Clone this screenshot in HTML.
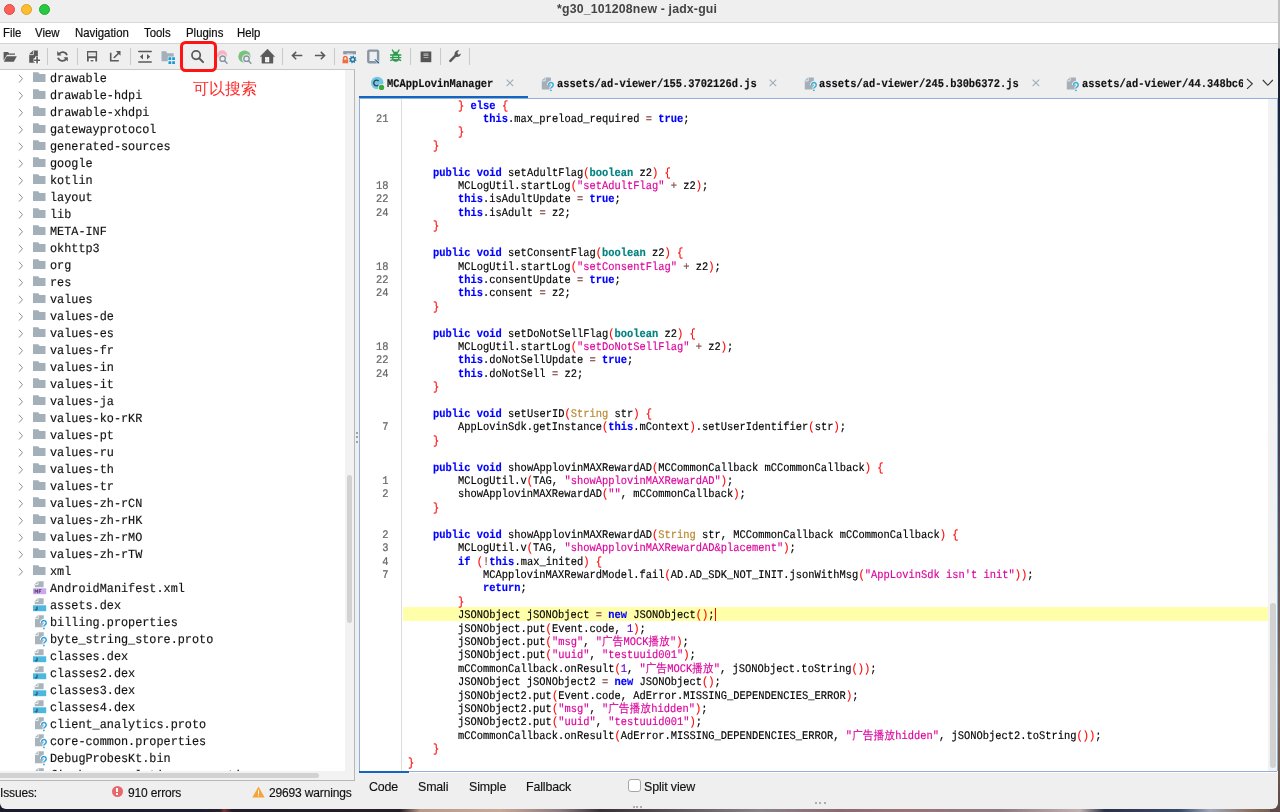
<!DOCTYPE html>
<html><head><meta charset="utf-8">
<style>
*{box-sizing:border-box}
html,body{margin:0;padding:0}
body{width:1280px;height:812px;overflow:hidden;position:relative;background:#1e1c26;font-family:"Liberation Sans",sans-serif}
#desk{position:absolute;left:0;top:800px;width:1280px;height:12px;background:linear-gradient(90deg,#1b1b2c 0px,#1d1d30 200px,#2a1f2a 220px,#7a3038 224px,#201c28 232px,#261e26 400px,#b89888 420px,#c8a898 500px,#8a7a80 560px,#3a3038 600px,#4a4048 640px,#6a6068 700px,#8a8088 760px,#8a6a72 840px,#9a7078 900px,#8a7a80 1000px,#c0b0b0 1080px,#2a3048 1105px,#3a4a68 1180px,#a0a8b8 1210px,#8a7060 1250px,#6a5a50 1280px)}
#deskr{position:absolute;left:1270px;top:0;width:10px;height:812px;background:linear-gradient(180deg,#c0c0c0 0px,#c0c0c0 48px,#151a28 49px,#2a3048 200px,#3a3a50 400px,#6a5a58 600px,#8a6a58 700px,#5a4a48 812px)}
.win{position:absolute;left:0;top:0;width:1278px;height:809px;background:#efefef;border-radius:0 0 6px 6px;overflow:hidden}
.abs{position:absolute}
#title{position:absolute;left:0;top:0;width:1278px;height:23px;background:#efefef;border-bottom:1px solid #d9d9d9}
.tl{position:absolute;top:4px;width:11px;height:11px;border-radius:50%}
#ttext{position:absolute;left:556.5px;top:2.3px;font-size:12.3px;font-weight:bold;color:#444;letter-spacing:0.17px;white-space:nowrap}
#menu{position:absolute;left:0;top:23px;width:1278px;height:21px;background:#fff;border-bottom:1px solid #d3d3d3}
.mi{position:absolute;top:3.5px;transform:scaleY(1.08);transform-origin:0 11px;font-size:11.4px;color:#111;white-space:nowrap;-webkit-text-stroke:0.2px #111}
#tree{position:absolute;left:0;top:69px;width:355px;height:712px;border-top:1px solid #c8c8c8;border-right:1px solid #b8b8b8;border-bottom:1px solid #b8b8b8;background:#f2f2f2}
#treewhite{position:absolute;left:0;top:70px;width:345px;height:701px;background:#fff;overflow:hidden}
.tt{position:absolute;text-rendering:geometricPrecision;transform:scaleY(1.06);transform-origin:0 12.5px;-webkit-text-stroke:0.15px currentColor;left:50.3px;height:17px;line-height:17px;font-family:"Liberation Mono",monospace;font-size:11.83px;color:#111;white-space:nowrap}
#annot{position:absolute;left:193px;top:79px;font-size:16px;color:#ff2a2a;letter-spacing:0px;white-space:nowrap}
#code{position:absolute;left:359px;top:98px;width:918px;height:675px;background:#fff;border-left:1px solid #8fb2d8;border-top:1px solid #8fb2d8;overflow:hidden}
.cl{position:absolute;text-rendering:geometricPrecision;transform:scaleY(1.12);transform-origin:0 9.5px;-webkit-text-stroke:0.15px currentColor;left:407.9px;height:13.41px;line-height:13.41px;font-family:"Liberation Mono",monospace;font-size:10.42px;letter-spacing:0.01px;color:#000;white-space:pre}
.ln{position:absolute;text-rendering:geometricPrecision;transform:scaleY(1.12);transform-origin:0 9.5px;-webkit-text-stroke:0.2px currentColor;left:359.5px;width:28.5px;text-align:right;height:13.41px;line-height:13.41px;font-family:"Liberation Mono",monospace;font-size:10.42px;color:#666;white-space:pre}
i{font-style:normal}
.cl,.ln,.tt,.tab,.mi,.bt,.st,#ttext,#annot{will-change:transform}
.cj{letter-spacing:0.35px}
i.kw{color:#0000ff;font-weight:bold}
i.ty{color:#008080;font-weight:bold}
i.fn{color:#b8862b}
i.str{color:#dc009c}
i.sep{color:#ff0000}
i.op{color:#804040}
i.num{color:#6400c8}
.tab{position:absolute;top:72px;text-rendering:geometricPrecision;transform:scaleY(1.12);transform-origin:0 17px;height:26px;line-height:26px;font-family:"Liberation Mono",monospace;font-size:10.42px;font-weight:bold;color:#111;white-space:nowrap;-webkit-text-stroke:0.15px #111}
.tx{position:absolute;top:76px;font-size:13px;color:#a8a8a8;font-family:"Liberation Sans",sans-serif}
.bt{position:absolute;top:779.9px;font-size:12.4px;letter-spacing:-0.12px;color:#111;white-space:nowrap;-webkit-text-stroke:0.15px #111}
.st{position:absolute;top:786.2px;font-size:12px;letter-spacing:-0.15px;color:#111;white-space:nowrap;-webkit-text-stroke:0.15px #111}
</style></head><body>
<div id="desk"></div>
<div id="deskr"></div>
<div class="win">
 <div id="title">
  <div class="tl" style="left:3.6px;background:#fe5f57;border:0.6px solid #e2463f"></div>
  <div class="tl" style="left:21.3px;background:#febc2e;border:0.6px solid #e0a028"></div>
  <div class="tl" style="left:39.1px;background:#28c840;border:0.6px solid #1aab29"></div>
  <div id="ttext">*g30_101208new - jadx-gui</div>
 </div>
 <div id="menu"><span class="mi" style="left:3.3px">File</span><span class="mi" style="left:34.9px">View</span><span class="mi" style="left:74.9px">Navigation</span><span class="mi" style="left:143.6px">Tools</span><span class="mi" style="left:185.70000000000002px">Plugins</span><span class="mi" style="left:237.3px">Help</span></div>
 <svg style="position:absolute;left:2px;top:50px" width="16" height="12" viewBox="0 0 16 12" ><path d="M1.6 1.9H6L7.2 3.6H13V4.8H5L1.6 10.5Z" fill="#5a5a5a"/><path d="M4.7 6.2H14.8L11.8 11.7H1.8Z" fill="#5a5a5a"/></svg>
<svg style="position:absolute;left:27.5px;top:49.5px" width="14" height="15" viewBox="0 0 14 15" ><path d="M1.2 4.3L5 0.4H9.9V12.8H1.2Z" fill="#5a5a5a"/><path d="M1.2 4.6H5.4V0.4" stroke="#e6e6e6" stroke-width="0.9" fill="none"/><path d="M9.1 6.4V13.9M5.6 10.3H12.6" stroke="#fff" stroke-width="4"/><path d="M9.1 6.9V13.4M6.1 10.3H12.1" stroke="#5a5a5a" stroke-width="1.6"/></svg>
<div style="position:absolute;left:47.0px;top:47.5px;width:1px;height:17.3px;background:#c9c9c9"></div>
<div style="position:absolute;left:77.0px;top:47.5px;width:1px;height:17.3px;background:#c9c9c9"></div>
<div style="position:absolute;left:129.5px;top:47.5px;width:1px;height:17.3px;background:#c9c9c9"></div>
<div style="position:absolute;left:281.7px;top:47.5px;width:1px;height:17.3px;background:#c9c9c9"></div>
<div style="position:absolute;left:334.1px;top:47.5px;width:1px;height:17.3px;background:#c9c9c9"></div>
<div style="position:absolute;left:410.1px;top:47.5px;width:1px;height:17.3px;background:#c9c9c9"></div>
<div style="position:absolute;left:439.8px;top:47.5px;width:1px;height:17.3px;background:#c9c9c9"></div>
<div style="position:absolute;left:469.0px;top:47.5px;width:1px;height:17.3px;background:#c9c9c9"></div>
<svg style="position:absolute;left:56px;top:50px" width="13" height="13" viewBox="0 0 13 13" ><path d="M2.8 4.2A4.6 4.6 0 0 1 11 5.2" stroke="#5a5a5a" stroke-width="1.8" fill="none"/><path d="M1.2 1V5.5H5.5Z" fill="#5a5a5a"/><path d="M10.2 8.8A4.6 4.6 0 0 1 2 7.8" stroke="#5a5a5a" stroke-width="1.8" fill="none"/><path d="M11.8 11.5V7.2H7.5Z" fill="#5a5a5a"/></svg>
<svg style="position:absolute;left:86px;top:50px" width="12" height="12" viewBox="0 0 12 12" ><path d="M2.8 8.3H9.3V11.6H2.8Z" fill="#fff"/><path fill-rule="evenodd" d="M1 1H11.1V11.6H9.3V8.3H2.8V11.6H1Z M2.2 2.6V6.2H9.8V2.6Z" fill="#5a5a5a"/><path d="M2.8 4.4H9.2" stroke="#d0d0d0" stroke-width="0.6"/><ellipse cx="6" cy="10.7" rx="1.8" ry="0.75" fill="#5a5a5a"/></svg>
<svg style="position:absolute;left:109px;top:50px" width="13" height="12" viewBox="0 0 13 12" ><path d="M0.9 2.7H2.5V10H9.8V11.6H0.9Z" fill="#5a5a5a"/><path d="M5.3 7.5L9.6 3.2" stroke="#5a5a5a" stroke-width="1.6" stroke-linecap="round"/><path d="M6.8 1H11.5V5.7Z" fill="#5a5a5a"/></svg>
<svg style="position:absolute;left:137.8px;top:49.5px" width="14" height="14" viewBox="0 0 14 14" ><path d="M0.8 1.4H13.2M0.8 12.1H13.2" stroke="#5a5a5a" stroke-width="1.5" stroke-linecap="round"/><path d="M1.9 6.8L5 4.1V9.5Z M12.2 6.8L9 4.1V9.5Z" fill="#5a5a5a"/></svg>
<svg style="position:absolute;left:161.3px;top:50.6px" width="15" height="14" viewBox="0 0 15 14" ><path d="M0.5 0.2H5.2L6.2 2.2H12.7V10.2H0.5Z" fill="#a3b0ba"/><path d="M6.8 5.6H14.5V13.6H6.8Z" fill="#efefef"/><path d="M7.5 6.2h2.7v2.9H7.5zM11.2 6.2h2.7v2.9H11.2zM7.5 10.2h2.7v2.9H7.5zM11.2 10.2h2.7v2.9H11.2z" fill="#139ad6"/></svg>
<div style="position:absolute;left:180.3px;top:41.3px;width:36.8px;height:30.9px;border:3px solid #ff1414;border-radius:5.5px;z-index:5"></div>
<svg style="position:absolute;left:191.2px;top:49.8px" width="14" height="14" viewBox="0 0 14 14" ><circle cx="5.1" cy="5.1" r="4.15" stroke="#5a5a5a" stroke-width="1.75" fill="none"/><path d="M8.2 8.2L12.1 12.1" stroke="#5a5a5a" stroke-width="2" stroke-linecap="round"/></svg>
<svg style="position:absolute;left:217px;top:49.5px" width="14" height="15" viewBox="0 0 14 15" ><circle cx="5.1" cy="5.3" r="5" fill="#f8b2c2"/><circle cx="5.6" cy="8.7" r="4.4" fill="#efefef"/><circle cx="5.6" cy="8.7" r="2.7" stroke="#8193a2" stroke-width="1.3" fill="none"/><path d="M7.6 10.8L10 13.2" stroke="#8193a2" stroke-width="1.4" stroke-linecap="round"/></svg>
<svg style="position:absolute;left:237.5px;top:49.5px" width="15" height="15" viewBox="0 0 15 15" ><circle cx="6.5" cy="6.6" r="6.2" fill="#79c27d"/><circle cx="8.5" cy="8.7" r="4.5" fill="#efefef"/><circle cx="8.5" cy="8.7" r="2.7" stroke="#8193a2" stroke-width="1.3" fill="none"/><path d="M10.5 10.8L12.9 13.2" stroke="#8193a2" stroke-width="1.4" stroke-linecap="round"/></svg>
<svg style="position:absolute;left:259.8px;top:48.8px" width="15" height="15" viewBox="0 0 15 15" ><path d="M7.5 0.1L14.7 7.6H13V14.2H1.9V7.6H0.2Z" fill="#5a5a5a" stroke="#5a5a5a" stroke-width="0.4" stroke-linejoin="round"/><path d="M5.1 8.1H9.2V13.2H5.1Z" fill="#fff"/><path d="M7.15 8.1V13.2M5.1 10.6H9.2" stroke="#cfcfcf" stroke-width="0.5"/></svg>
<svg style="position:absolute;left:290.5px;top:51.4px" width="12" height="10" viewBox="0 0 12 10" ><path d="M11.3 4.6H1.8M5.2 0.9L1.4 4.6 5.2 8.3" stroke="#5a5a5a" stroke-width="1.5" fill="none"/></svg>
<svg style="position:absolute;left:314px;top:51.4px" width="12" height="10" viewBox="0 0 12 10" ><path d="M0.9 4.6H10.2M6.8 0.9L10.6 4.6 6.8 8.3" stroke="#5a5a5a" stroke-width="1.5" fill="none"/></svg>
<svg style="position:absolute;left:341.8px;top:50.8px" width="16" height="14" viewBox="0 0 16 14" ><path d="M1.2 0.1H14V3.3H1.2Z" fill="#8a98a4"/><path d="M4.5 3.1L6.5 2.4 8.5 3.2 10.5 2.5" stroke="#efefef" stroke-width="0.7" fill="none"/><path d="M0.5 8.7H6.2V12.3H0.5Z" fill="#f26d3d"/><path d="M1.6 8.9V7.3A1.75 1.75 0 0 1 5.1 7.3V8.9" stroke="#f26d3d" stroke-width="1.5" fill="none"/><path d="M13.60 8.50 L14.57 8.96 L14.36 9.85 L13.28 9.82 L12.75 10.55 L13.11 11.56 L12.33 12.04 L11.60 11.26 L10.70 11.40 L10.24 12.37 L9.35 12.16 L9.38 11.08 L8.65 10.55 L7.64 10.91 L7.16 10.13 L7.94 9.40 L7.80 8.50 L6.83 8.04 L7.04 7.15 L8.12 7.18 L8.65 6.45 L8.29 5.44 L9.07 4.96 L9.80 5.74 L10.70 5.60 L11.16 4.63 L12.05 4.84 L12.02 5.92 L12.75 6.45 L13.76 6.09 L14.24 6.87 L13.46 7.60Z" fill="#2174a4"/><circle cx="10.7" cy="8.5" r="1.3" fill="#efefef"/></svg>
<svg style="position:absolute;left:366.6px;top:48.6px" width="14" height="16" viewBox="0 0 14 16" ><rect x="1.3" y="1.6" width="9.8" height="11.7" rx="1" stroke="#8796a2" stroke-width="2.4" fill="none"/><path d="M7 9L12.8 12.6Q14.2 15.6 10.6 15L6.6 10Z" fill="#efefef"/><path d="M7.9 9.9L12 12.9Q13 14.9 10.8 14.3L7.5 10.6Z" fill="#176ba0"/></svg>
<svg style="position:absolute;left:390.2px;top:49.3px" width="12" height="14" viewBox="0 0 12 14" ><ellipse cx="5.7" cy="8.4" rx="3.7" ry="4.3" fill="#2e9a4e"/><ellipse cx="5.7" cy="4.1" rx="2.3" ry="1.6" fill="#2e9a4e"/><path d="M3.6 3.2L2.4 1M7.8 3.2L9 1M0.6 6H2.4M9 6H10.8M0.6 8.6H2.4M9 8.6H10.8M0.8 11.4L2.6 10.6M10.6 11.4L8.8 10.6" stroke="#2e9a4e" stroke-width="1.4" stroke-linecap="round"/><path d="M3.4 7.3H8M3.4 9.6H8" stroke="#efefef" stroke-width="0.9"/></svg>
<svg style="position:absolute;left:419.5px;top:50.5px" width="12" height="12" viewBox="0 0 12 12" ><path d="M0.6 0.5H11.3V11.2H0.6Z" fill="#555"/><path d="M3.5 2.6H8.5V3.4H3.5ZM3.5 4H8.5V4.8H3.5ZM3.5 6.3H8.5V7.1H3.5Z" fill="#c8c8c8"/></svg>
<svg style="position:absolute;left:449px;top:49.8px" width="13" height="13" viewBox="0 0 13 13" ><path d="M1.4 10.9L6.3 5.9" stroke="#5a5a5a" stroke-width="2.5" stroke-linecap="round"/><path d="M5.5 4.4A3.7 3.7 0 0 1 10.2 0.5L8.3 2.6 9.5 4.7 11.9 3.4A3.7 3.7 0 0 1 7.4 7Z" fill="#5a5a5a"/></svg>
 <div id="tree"></div>
 <div id="treewhite">
 </div>
 <div style="position:absolute;left:0;top:0;width:345px;height:771px;overflow:hidden">
 <svg style="position:absolute;left:18.3px;top:73.9px" width="6" height="10" viewBox="0 0 6 10" ><path d="M1 0.8L4.5 4.7 1 8.6" stroke="#8f8f8f" stroke-width="1" fill="none"/></svg><svg style="position:absolute;left:33px;top:72.2px" width="13" height="11" viewBox="0 0 13 11" ><path d="M0 0.2H5.2L6.6 1.9H12.5V10H0Z" fill="#a4b0b9"/></svg><div class="tt" style="top:71.2px">drawable</div>
<svg style="position:absolute;left:18.3px;top:90.9px" width="6" height="10" viewBox="0 0 6 10" ><path d="M1 0.8L4.5 4.7 1 8.6" stroke="#8f8f8f" stroke-width="1" fill="none"/></svg><svg style="position:absolute;left:33px;top:89.2px" width="13" height="11" viewBox="0 0 13 11" ><path d="M0 0.2H5.2L6.6 1.9H12.5V10H0Z" fill="#a4b0b9"/></svg><div class="tt" style="top:88.2px">drawable-hdpi</div>
<svg style="position:absolute;left:18.3px;top:107.9px" width="6" height="10" viewBox="0 0 6 10" ><path d="M1 0.8L4.5 4.7 1 8.6" stroke="#8f8f8f" stroke-width="1" fill="none"/></svg><svg style="position:absolute;left:33px;top:106.2px" width="13" height="11" viewBox="0 0 13 11" ><path d="M0 0.2H5.2L6.6 1.9H12.5V10H0Z" fill="#a4b0b9"/></svg><div class="tt" style="top:105.2px">drawable-xhdpi</div>
<svg style="position:absolute;left:18.3px;top:124.9px" width="6" height="10" viewBox="0 0 6 10" ><path d="M1 0.8L4.5 4.7 1 8.6" stroke="#8f8f8f" stroke-width="1" fill="none"/></svg><svg style="position:absolute;left:33px;top:123.2px" width="13" height="11" viewBox="0 0 13 11" ><path d="M0 0.2H5.2L6.6 1.9H12.5V10H0Z" fill="#a4b0b9"/></svg><div class="tt" style="top:122.2px">gatewayprotocol</div>
<svg style="position:absolute;left:18.3px;top:141.9px" width="6" height="10" viewBox="0 0 6 10" ><path d="M1 0.8L4.5 4.7 1 8.6" stroke="#8f8f8f" stroke-width="1" fill="none"/></svg><svg style="position:absolute;left:33px;top:140.2px" width="13" height="11" viewBox="0 0 13 11" ><path d="M0 0.2H5.2L6.6 1.9H12.5V10H0Z" fill="#a4b0b9"/></svg><div class="tt" style="top:139.2px">generated-sources</div>
<svg style="position:absolute;left:18.3px;top:158.9px" width="6" height="10" viewBox="0 0 6 10" ><path d="M1 0.8L4.5 4.7 1 8.6" stroke="#8f8f8f" stroke-width="1" fill="none"/></svg><svg style="position:absolute;left:33px;top:157.2px" width="13" height="11" viewBox="0 0 13 11" ><path d="M0 0.2H5.2L6.6 1.9H12.5V10H0Z" fill="#a4b0b9"/></svg><div class="tt" style="top:156.2px">google</div>
<svg style="position:absolute;left:18.3px;top:175.9px" width="6" height="10" viewBox="0 0 6 10" ><path d="M1 0.8L4.5 4.7 1 8.6" stroke="#8f8f8f" stroke-width="1" fill="none"/></svg><svg style="position:absolute;left:33px;top:174.2px" width="13" height="11" viewBox="0 0 13 11" ><path d="M0 0.2H5.2L6.6 1.9H12.5V10H0Z" fill="#a4b0b9"/></svg><div class="tt" style="top:173.2px">kotlin</div>
<svg style="position:absolute;left:18.3px;top:192.9px" width="6" height="10" viewBox="0 0 6 10" ><path d="M1 0.8L4.5 4.7 1 8.6" stroke="#8f8f8f" stroke-width="1" fill="none"/></svg><svg style="position:absolute;left:33px;top:191.2px" width="13" height="11" viewBox="0 0 13 11" ><path d="M0 0.2H5.2L6.6 1.9H12.5V10H0Z" fill="#a4b0b9"/></svg><div class="tt" style="top:190.2px">layout</div>
<svg style="position:absolute;left:18.3px;top:209.9px" width="6" height="10" viewBox="0 0 6 10" ><path d="M1 0.8L4.5 4.7 1 8.6" stroke="#8f8f8f" stroke-width="1" fill="none"/></svg><svg style="position:absolute;left:33px;top:208.2px" width="13" height="11" viewBox="0 0 13 11" ><path d="M0 0.2H5.2L6.6 1.9H12.5V10H0Z" fill="#a4b0b9"/></svg><div class="tt" style="top:207.2px">lib</div>
<svg style="position:absolute;left:18.3px;top:226.9px" width="6" height="10" viewBox="0 0 6 10" ><path d="M1 0.8L4.5 4.7 1 8.6" stroke="#8f8f8f" stroke-width="1" fill="none"/></svg><svg style="position:absolute;left:33px;top:225.2px" width="13" height="11" viewBox="0 0 13 11" ><path d="M0 0.2H5.2L6.6 1.9H12.5V10H0Z" fill="#a4b0b9"/></svg><div class="tt" style="top:224.2px">META-INF</div>
<svg style="position:absolute;left:18.3px;top:243.9px" width="6" height="10" viewBox="0 0 6 10" ><path d="M1 0.8L4.5 4.7 1 8.6" stroke="#8f8f8f" stroke-width="1" fill="none"/></svg><svg style="position:absolute;left:33px;top:242.2px" width="13" height="11" viewBox="0 0 13 11" ><path d="M0 0.2H5.2L6.6 1.9H12.5V10H0Z" fill="#a4b0b9"/></svg><div class="tt" style="top:241.2px">okhttp3</div>
<svg style="position:absolute;left:18.3px;top:260.9px" width="6" height="10" viewBox="0 0 6 10" ><path d="M1 0.8L4.5 4.7 1 8.6" stroke="#8f8f8f" stroke-width="1" fill="none"/></svg><svg style="position:absolute;left:33px;top:259.2px" width="13" height="11" viewBox="0 0 13 11" ><path d="M0 0.2H5.2L6.6 1.9H12.5V10H0Z" fill="#a4b0b9"/></svg><div class="tt" style="top:258.2px">org</div>
<svg style="position:absolute;left:18.3px;top:277.9px" width="6" height="10" viewBox="0 0 6 10" ><path d="M1 0.8L4.5 4.7 1 8.6" stroke="#8f8f8f" stroke-width="1" fill="none"/></svg><svg style="position:absolute;left:33px;top:276.2px" width="13" height="11" viewBox="0 0 13 11" ><path d="M0 0.2H5.2L6.6 1.9H12.5V10H0Z" fill="#a4b0b9"/></svg><div class="tt" style="top:275.2px">res</div>
<svg style="position:absolute;left:18.3px;top:294.9px" width="6" height="10" viewBox="0 0 6 10" ><path d="M1 0.8L4.5 4.7 1 8.6" stroke="#8f8f8f" stroke-width="1" fill="none"/></svg><svg style="position:absolute;left:33px;top:293.2px" width="13" height="11" viewBox="0 0 13 11" ><path d="M0 0.2H5.2L6.6 1.9H12.5V10H0Z" fill="#a4b0b9"/></svg><div class="tt" style="top:292.2px">values</div>
<svg style="position:absolute;left:18.3px;top:311.9px" width="6" height="10" viewBox="0 0 6 10" ><path d="M1 0.8L4.5 4.7 1 8.6" stroke="#8f8f8f" stroke-width="1" fill="none"/></svg><svg style="position:absolute;left:33px;top:310.2px" width="13" height="11" viewBox="0 0 13 11" ><path d="M0 0.2H5.2L6.6 1.9H12.5V10H0Z" fill="#a4b0b9"/></svg><div class="tt" style="top:309.2px">values-de</div>
<svg style="position:absolute;left:18.3px;top:328.9px" width="6" height="10" viewBox="0 0 6 10" ><path d="M1 0.8L4.5 4.7 1 8.6" stroke="#8f8f8f" stroke-width="1" fill="none"/></svg><svg style="position:absolute;left:33px;top:327.2px" width="13" height="11" viewBox="0 0 13 11" ><path d="M0 0.2H5.2L6.6 1.9H12.5V10H0Z" fill="#a4b0b9"/></svg><div class="tt" style="top:326.2px">values-es</div>
<svg style="position:absolute;left:18.3px;top:345.9px" width="6" height="10" viewBox="0 0 6 10" ><path d="M1 0.8L4.5 4.7 1 8.6" stroke="#8f8f8f" stroke-width="1" fill="none"/></svg><svg style="position:absolute;left:33px;top:344.2px" width="13" height="11" viewBox="0 0 13 11" ><path d="M0 0.2H5.2L6.6 1.9H12.5V10H0Z" fill="#a4b0b9"/></svg><div class="tt" style="top:343.2px">values-fr</div>
<svg style="position:absolute;left:18.3px;top:362.9px" width="6" height="10" viewBox="0 0 6 10" ><path d="M1 0.8L4.5 4.7 1 8.6" stroke="#8f8f8f" stroke-width="1" fill="none"/></svg><svg style="position:absolute;left:33px;top:361.2px" width="13" height="11" viewBox="0 0 13 11" ><path d="M0 0.2H5.2L6.6 1.9H12.5V10H0Z" fill="#a4b0b9"/></svg><div class="tt" style="top:360.2px">values-in</div>
<svg style="position:absolute;left:18.3px;top:379.9px" width="6" height="10" viewBox="0 0 6 10" ><path d="M1 0.8L4.5 4.7 1 8.6" stroke="#8f8f8f" stroke-width="1" fill="none"/></svg><svg style="position:absolute;left:33px;top:378.2px" width="13" height="11" viewBox="0 0 13 11" ><path d="M0 0.2H5.2L6.6 1.9H12.5V10H0Z" fill="#a4b0b9"/></svg><div class="tt" style="top:377.2px">values-it</div>
<svg style="position:absolute;left:18.3px;top:396.9px" width="6" height="10" viewBox="0 0 6 10" ><path d="M1 0.8L4.5 4.7 1 8.6" stroke="#8f8f8f" stroke-width="1" fill="none"/></svg><svg style="position:absolute;left:33px;top:395.2px" width="13" height="11" viewBox="0 0 13 11" ><path d="M0 0.2H5.2L6.6 1.9H12.5V10H0Z" fill="#a4b0b9"/></svg><div class="tt" style="top:394.2px">values-ja</div>
<svg style="position:absolute;left:18.3px;top:413.9px" width="6" height="10" viewBox="0 0 6 10" ><path d="M1 0.8L4.5 4.7 1 8.6" stroke="#8f8f8f" stroke-width="1" fill="none"/></svg><svg style="position:absolute;left:33px;top:412.2px" width="13" height="11" viewBox="0 0 13 11" ><path d="M0 0.2H5.2L6.6 1.9H12.5V10H0Z" fill="#a4b0b9"/></svg><div class="tt" style="top:411.2px">values-ko-rKR</div>
<svg style="position:absolute;left:18.3px;top:430.9px" width="6" height="10" viewBox="0 0 6 10" ><path d="M1 0.8L4.5 4.7 1 8.6" stroke="#8f8f8f" stroke-width="1" fill="none"/></svg><svg style="position:absolute;left:33px;top:429.2px" width="13" height="11" viewBox="0 0 13 11" ><path d="M0 0.2H5.2L6.6 1.9H12.5V10H0Z" fill="#a4b0b9"/></svg><div class="tt" style="top:428.2px">values-pt</div>
<svg style="position:absolute;left:18.3px;top:447.9px" width="6" height="10" viewBox="0 0 6 10" ><path d="M1 0.8L4.5 4.7 1 8.6" stroke="#8f8f8f" stroke-width="1" fill="none"/></svg><svg style="position:absolute;left:33px;top:446.2px" width="13" height="11" viewBox="0 0 13 11" ><path d="M0 0.2H5.2L6.6 1.9H12.5V10H0Z" fill="#a4b0b9"/></svg><div class="tt" style="top:445.2px">values-ru</div>
<svg style="position:absolute;left:18.3px;top:464.9px" width="6" height="10" viewBox="0 0 6 10" ><path d="M1 0.8L4.5 4.7 1 8.6" stroke="#8f8f8f" stroke-width="1" fill="none"/></svg><svg style="position:absolute;left:33px;top:463.2px" width="13" height="11" viewBox="0 0 13 11" ><path d="M0 0.2H5.2L6.6 1.9H12.5V10H0Z" fill="#a4b0b9"/></svg><div class="tt" style="top:462.2px">values-th</div>
<svg style="position:absolute;left:18.3px;top:481.9px" width="6" height="10" viewBox="0 0 6 10" ><path d="M1 0.8L4.5 4.7 1 8.6" stroke="#8f8f8f" stroke-width="1" fill="none"/></svg><svg style="position:absolute;left:33px;top:480.2px" width="13" height="11" viewBox="0 0 13 11" ><path d="M0 0.2H5.2L6.6 1.9H12.5V10H0Z" fill="#a4b0b9"/></svg><div class="tt" style="top:479.2px">values-tr</div>
<svg style="position:absolute;left:18.3px;top:498.9px" width="6" height="10" viewBox="0 0 6 10" ><path d="M1 0.8L4.5 4.7 1 8.6" stroke="#8f8f8f" stroke-width="1" fill="none"/></svg><svg style="position:absolute;left:33px;top:497.2px" width="13" height="11" viewBox="0 0 13 11" ><path d="M0 0.2H5.2L6.6 1.9H12.5V10H0Z" fill="#a4b0b9"/></svg><div class="tt" style="top:496.2px">values-zh-rCN</div>
<svg style="position:absolute;left:18.3px;top:515.9px" width="6" height="10" viewBox="0 0 6 10" ><path d="M1 0.8L4.5 4.7 1 8.6" stroke="#8f8f8f" stroke-width="1" fill="none"/></svg><svg style="position:absolute;left:33px;top:514.2px" width="13" height="11" viewBox="0 0 13 11" ><path d="M0 0.2H5.2L6.6 1.9H12.5V10H0Z" fill="#a4b0b9"/></svg><div class="tt" style="top:513.2px">values-zh-rHK</div>
<svg style="position:absolute;left:18.3px;top:532.9px" width="6" height="10" viewBox="0 0 6 10" ><path d="M1 0.8L4.5 4.7 1 8.6" stroke="#8f8f8f" stroke-width="1" fill="none"/></svg><svg style="position:absolute;left:33px;top:531.2px" width="13" height="11" viewBox="0 0 13 11" ><path d="M0 0.2H5.2L6.6 1.9H12.5V10H0Z" fill="#a4b0b9"/></svg><div class="tt" style="top:530.2px">values-zh-rMO</div>
<svg style="position:absolute;left:18.3px;top:549.9px" width="6" height="10" viewBox="0 0 6 10" ><path d="M1 0.8L4.5 4.7 1 8.6" stroke="#8f8f8f" stroke-width="1" fill="none"/></svg><svg style="position:absolute;left:33px;top:548.2px" width="13" height="11" viewBox="0 0 13 11" ><path d="M0 0.2H5.2L6.6 1.9H12.5V10H0Z" fill="#a4b0b9"/></svg><div class="tt" style="top:547.2px">values-zh-rTW</div>
<svg style="position:absolute;left:18.3px;top:566.9px" width="6" height="10" viewBox="0 0 6 10" ><path d="M1 0.8L4.5 4.7 1 8.6" stroke="#8f8f8f" stroke-width="1" fill="none"/></svg><svg style="position:absolute;left:33px;top:565.2px" width="13" height="11" viewBox="0 0 13 11" ><path d="M0 0.2H5.2L6.6 1.9H12.5V10H0Z" fill="#a4b0b9"/></svg><div class="tt" style="top:564.2px">xml</div>
<svg style="position:absolute;left:33px;top:580.8px" width="14" height="14" viewBox="0 0 14 14" ><path d="M1.8 3.2L4.6 0.3H10.6V6.2H1.8Z" fill="#a9b3bb"/><path d="M1.8 3.6H5V0.3" stroke="#fff" stroke-width="0.8" fill="none"/><path d="M0 7.3H13.2V13.2H0Z" fill="#c9a7f2"/><path d="M2.1 12.2V8.6L3.3 10.8 4.5 8.6V12.2M6.2 12.2V8.6H8.4M6.2 10.3H8" stroke="#4a3a5a" stroke-width="0.8" fill="none"/></svg><div class="tt" style="top:581.2px">AndroidManifest.xml</div>
<svg style="position:absolute;left:33px;top:597.8px" width="14" height="14" viewBox="0 0 14 14" ><path d="M1.8 3.2L4.6 0.3H10.6V6.2H1.8Z" fill="#a9b3bb"/><path d="M1.8 3.6H5V0.3" stroke="#fff" stroke-width="0.8" fill="none"/><path d="M0 7.3H13.2V13.2H0Z" fill="#4cb7df"/><path d="M4 8.6V11.3A0.9 0.9 0 0 1 2.2 11.3" stroke="#23323c" stroke-width="0.9" fill="none"/></svg><div class="tt" style="top:598.2px">assets.dex</div>
<svg style="position:absolute;left:33px;top:614.8px" width="15" height="15" viewBox="0 0 15 15" ><path d="M2 3.2L4.8 0.3H10.8V12.2H2Z" fill="#a9b3bb"/><path d="M2 3.6H5.2V0.3" stroke="#fff" stroke-width="0.8" fill="none"/><path d="M8.6 7.9A2.3 2.3 0 1 1 12.4 9.6C11.2 10.3 10.9 10.6 10.9 11.6" stroke="#fff" stroke-width="3.4" fill="none"/><path d="M8.6 7.9A2.3 2.3 0 1 1 12.4 9.6C11.2 10.3 10.9 10.6 10.9 11.6" stroke="#2aa3dc" stroke-width="1.5" fill="none"/><circle cx="10.9" cy="13.4" r="1.6" fill="#fff"/><circle cx="10.9" cy="13.4" r="0.85" fill="#2aa3dc"/></svg><div class="tt" style="top:615.2px">billing.properties</div>
<svg style="position:absolute;left:33px;top:631.8px" width="15" height="15" viewBox="0 0 15 15" ><path d="M2 3.2L4.8 0.3H10.8V12.2H2Z" fill="#a9b3bb"/><path d="M2 3.6H5.2V0.3" stroke="#fff" stroke-width="0.8" fill="none"/><path d="M8.6 7.9A2.3 2.3 0 1 1 12.4 9.6C11.2 10.3 10.9 10.6 10.9 11.6" stroke="#fff" stroke-width="3.4" fill="none"/><path d="M8.6 7.9A2.3 2.3 0 1 1 12.4 9.6C11.2 10.3 10.9 10.6 10.9 11.6" stroke="#2aa3dc" stroke-width="1.5" fill="none"/><circle cx="10.9" cy="13.4" r="1.6" fill="#fff"/><circle cx="10.9" cy="13.4" r="0.85" fill="#2aa3dc"/></svg><div class="tt" style="top:632.2px">byte_string_store.proto</div>
<svg style="position:absolute;left:33px;top:648.8px" width="14" height="14" viewBox="0 0 14 14" ><path d="M1.8 3.2L4.6 0.3H10.6V6.2H1.8Z" fill="#a9b3bb"/><path d="M1.8 3.6H5V0.3" stroke="#fff" stroke-width="0.8" fill="none"/><path d="M0 7.3H13.2V13.2H0Z" fill="#4cb7df"/><path d="M4 8.6V11.3A0.9 0.9 0 0 1 2.2 11.3" stroke="#23323c" stroke-width="0.9" fill="none"/></svg><div class="tt" style="top:649.2px">classes.dex</div>
<svg style="position:absolute;left:33px;top:665.8px" width="14" height="14" viewBox="0 0 14 14" ><path d="M1.8 3.2L4.6 0.3H10.6V6.2H1.8Z" fill="#a9b3bb"/><path d="M1.8 3.6H5V0.3" stroke="#fff" stroke-width="0.8" fill="none"/><path d="M0 7.3H13.2V13.2H0Z" fill="#4cb7df"/><path d="M4 8.6V11.3A0.9 0.9 0 0 1 2.2 11.3" stroke="#23323c" stroke-width="0.9" fill="none"/></svg><div class="tt" style="top:666.2px">classes2.dex</div>
<svg style="position:absolute;left:33px;top:682.8px" width="14" height="14" viewBox="0 0 14 14" ><path d="M1.8 3.2L4.6 0.3H10.6V6.2H1.8Z" fill="#a9b3bb"/><path d="M1.8 3.6H5V0.3" stroke="#fff" stroke-width="0.8" fill="none"/><path d="M0 7.3H13.2V13.2H0Z" fill="#4cb7df"/><path d="M4 8.6V11.3A0.9 0.9 0 0 1 2.2 11.3" stroke="#23323c" stroke-width="0.9" fill="none"/></svg><div class="tt" style="top:683.2px">classes3.dex</div>
<svg style="position:absolute;left:33px;top:699.8px" width="14" height="14" viewBox="0 0 14 14" ><path d="M1.8 3.2L4.6 0.3H10.6V6.2H1.8Z" fill="#a9b3bb"/><path d="M1.8 3.6H5V0.3" stroke="#fff" stroke-width="0.8" fill="none"/><path d="M0 7.3H13.2V13.2H0Z" fill="#4cb7df"/><path d="M4 8.6V11.3A0.9 0.9 0 0 1 2.2 11.3" stroke="#23323c" stroke-width="0.9" fill="none"/></svg><div class="tt" style="top:700.2px">classes4.dex</div>
<svg style="position:absolute;left:33px;top:716.8px" width="15" height="15" viewBox="0 0 15 15" ><path d="M2 3.2L4.8 0.3H10.8V12.2H2Z" fill="#a9b3bb"/><path d="M2 3.6H5.2V0.3" stroke="#fff" stroke-width="0.8" fill="none"/><path d="M8.6 7.9A2.3 2.3 0 1 1 12.4 9.6C11.2 10.3 10.9 10.6 10.9 11.6" stroke="#fff" stroke-width="3.4" fill="none"/><path d="M8.6 7.9A2.3 2.3 0 1 1 12.4 9.6C11.2 10.3 10.9 10.6 10.9 11.6" stroke="#2aa3dc" stroke-width="1.5" fill="none"/><circle cx="10.9" cy="13.4" r="1.6" fill="#fff"/><circle cx="10.9" cy="13.4" r="0.85" fill="#2aa3dc"/></svg><div class="tt" style="top:717.2px">client_analytics.proto</div>
<svg style="position:absolute;left:33px;top:733.8px" width="15" height="15" viewBox="0 0 15 15" ><path d="M2 3.2L4.8 0.3H10.8V12.2H2Z" fill="#a9b3bb"/><path d="M2 3.6H5.2V0.3" stroke="#fff" stroke-width="0.8" fill="none"/><path d="M8.6 7.9A2.3 2.3 0 1 1 12.4 9.6C11.2 10.3 10.9 10.6 10.9 11.6" stroke="#fff" stroke-width="3.4" fill="none"/><path d="M8.6 7.9A2.3 2.3 0 1 1 12.4 9.6C11.2 10.3 10.9 10.6 10.9 11.6" stroke="#2aa3dc" stroke-width="1.5" fill="none"/><circle cx="10.9" cy="13.4" r="1.6" fill="#fff"/><circle cx="10.9" cy="13.4" r="0.85" fill="#2aa3dc"/></svg><div class="tt" style="top:734.2px">core-common.properties</div>
<svg style="position:absolute;left:33px;top:750.8px" width="15" height="15" viewBox="0 0 15 15" ><path d="M2 3.2L4.8 0.3H10.8V12.2H2Z" fill="#a9b3bb"/><path d="M2 3.6H5.2V0.3" stroke="#fff" stroke-width="0.8" fill="none"/><path d="M8.6 7.9A2.3 2.3 0 1 1 12.4 9.6C11.2 10.3 10.9 10.6 10.9 11.6" stroke="#fff" stroke-width="3.4" fill="none"/><path d="M8.6 7.9A2.3 2.3 0 1 1 12.4 9.6C11.2 10.3 10.9 10.6 10.9 11.6" stroke="#2aa3dc" stroke-width="1.5" fill="none"/><circle cx="10.9" cy="13.4" r="1.6" fill="#fff"/><circle cx="10.9" cy="13.4" r="0.85" fill="#2aa3dc"/></svg><div class="tt" style="top:751.2px">DebugProbesKt.bin</div>
<svg style="position:absolute;left:33px;top:767.8px" width="15" height="15" viewBox="0 0 15 15" ><path d="M2 3.2L4.8 0.3H10.8V12.2H2Z" fill="#a9b3bb"/><path d="M2 3.6H5.2V0.3" stroke="#fff" stroke-width="0.8" fill="none"/><path d="M8.6 7.9A2.3 2.3 0 1 1 12.4 9.6C11.2 10.3 10.9 10.6 10.9 11.6" stroke="#fff" stroke-width="3.4" fill="none"/><path d="M8.6 7.9A2.3 2.3 0 1 1 12.4 9.6C11.2 10.3 10.9 10.6 10.9 11.6" stroke="#2aa3dc" stroke-width="1.5" fill="none"/><circle cx="10.9" cy="13.4" r="1.6" fill="#fff"/><circle cx="10.9" cy="13.4" r="0.85" fill="#2aa3dc"/></svg><div class="tt" style="top:768.2px">firebase-analytics.properties</div>
 </div>
 <div style="position:absolute;left:346.6px;top:474.5px;width:5.4px;height:148px;background:#d2d2d2;border-radius:3px"></div>
 <div style="position:absolute;left:-3px;top:773px;width:322px;height:4.6px;background:#d2d2d2;border-radius:3px"></div>
 <div style="position:absolute;left:356.3px;top:432px;width:2px;height:2px;border-radius:1px;background:#888"></div>
 <div style="position:absolute;left:356.3px;top:436.4px;width:2px;height:2px;border-radius:1px;background:#888"></div>
 <div style="position:absolute;left:356.3px;top:440.8px;width:2px;height:2px;border-radius:1px;background:#888"></div>
 <div id="annot">可以搜索</div>

 <!-- tabs -->
 <svg style="position:absolute;left:370px;top:76px" width="16" height="16" viewBox="0 0 16 16"><circle cx="7.2" cy="7" r="6.2" fill="#6ec8e6"/><path d="M8.6 5.0A2.85 2.85 0 1 0 8.6 9.0" stroke="#34434d" stroke-width="1.35" fill="none"/><circle cx="11.5" cy="11.4" r="3.5" fill="#efefef"/><circle cx="11.5" cy="11.4" r="2.7" fill="#3aaa3e"/></svg>
 <div class="tab" style="left:387.3px">MCAppLovinManager</div>
 <svg style="position:absolute;left:506.3px;top:78.7px" width="8" height="8" viewBox="0 0 8 8"><path d="M0.6 0.6L7.2 7.2M7.2 0.6L0.6 7.2" stroke="#a3adb5" stroke-width="1.15"/></svg>
 <svg style="position:absolute;left:541.0px;top:76.5px" width="14" height="15" viewBox="0 0 14 15"><path d="M0.8 3.5L3.8 0.5H9.9V12.4H0.8Z" fill="#a4afb8"/><path d="M0.8 3.9H4.2V0.5" stroke="#efefef" stroke-width="0.9" fill="none"/><path d="M7.6 7.9A2.3 2.3 0 1 1 11.4 9.6C10.2 10.3 9.9 10.6 9.9 11.6" stroke="#efefef" stroke-width="3.4" fill="none"/><path d="M7.6 7.9A2.3 2.3 0 1 1 11.4 9.6C10.2 10.3 9.9 10.6 9.9 11.6" stroke="#33b0e0" stroke-width="1.5" fill="none"/><circle cx="9.9" cy="13.3" r="1.6" fill="#efefef"/><circle cx="9.9" cy="13.3" r="0.9" fill="#33b0e0"/></svg>
 <div class="tab" style="left:556.6px">assets/ad-viewer/155.3702126d.js</div>
 <svg style="position:absolute;left:769.3px;top:78.7px" width="8" height="8" viewBox="0 0 8 8"><path d="M0.6 0.6L7.2 7.2M7.2 0.6L0.6 7.2" stroke="#a3adb5" stroke-width="1.15"/></svg>
 <svg style="position:absolute;left:803.5px;top:76.5px" width="14" height="15" viewBox="0 0 14 15"><path d="M0.8 3.5L3.8 0.5H9.9V12.4H0.8Z" fill="#a4afb8"/><path d="M0.8 3.9H4.2V0.5" stroke="#efefef" stroke-width="0.9" fill="none"/><path d="M7.6 7.9A2.3 2.3 0 1 1 11.4 9.6C10.2 10.3 9.9 10.6 9.9 11.6" stroke="#efefef" stroke-width="3.4" fill="none"/><path d="M7.6 7.9A2.3 2.3 0 1 1 11.4 9.6C10.2 10.3 9.9 10.6 9.9 11.6" stroke="#33b0e0" stroke-width="1.5" fill="none"/><circle cx="9.9" cy="13.3" r="1.6" fill="#efefef"/><circle cx="9.9" cy="13.3" r="0.9" fill="#33b0e0"/></svg>
 <div class="tab" style="left:819.3px">assets/ad-viewer/245.b30b6372.js</div>
 <svg style="position:absolute;left:1031.8px;top:78.7px" width="8" height="8" viewBox="0 0 8 8"><path d="M0.6 0.6L7.2 7.2M7.2 0.6L0.6 7.2" stroke="#a3adb5" stroke-width="1.15"/></svg>
 <svg style="position:absolute;left:1066.0px;top:76.5px" width="14" height="15" viewBox="0 0 14 15"><path d="M0.8 3.5L3.8 0.5H9.9V12.4H0.8Z" fill="#a4afb8"/><path d="M0.8 3.9H4.2V0.5" stroke="#efefef" stroke-width="0.9" fill="none"/><path d="M7.6 7.9A2.3 2.3 0 1 1 11.4 9.6C10.2 10.3 9.9 10.6 9.9 11.6" stroke="#efefef" stroke-width="3.4" fill="none"/><path d="M7.6 7.9A2.3 2.3 0 1 1 11.4 9.6C10.2 10.3 9.9 10.6 9.9 11.6" stroke="#33b0e0" stroke-width="1.5" fill="none"/><circle cx="9.9" cy="13.3" r="1.6" fill="#efefef"/><circle cx="9.9" cy="13.3" r="0.9" fill="#33b0e0"/></svg>
 <div style="position:absolute;left:1080px;top:70px;width:163px;height:26px;overflow:hidden"><div class="tab" style="left:1.8px;top:2px">assets/ad-viewer/44.348bc6</div></div>
 <svg style="position:absolute;left:1246px;top:78px" width="8" height="12" viewBox="0 0 8 12"><path d="M1 0.8L6.3 5.8 1 10.8" stroke="#333" stroke-width="1.1" fill="none"/></svg>
 <svg style="position:absolute;left:1262px;top:79px" width="12" height="8" viewBox="0 0 12 8"><path d="M0.8 1L5.8 6.3 10.8 1" stroke="#333" stroke-width="1.1" fill="none"/></svg>
 <div style="position:absolute;left:359px;top:95.7px;width:168.5px;height:2.6px;background:#1565c0"></div>

 <div id="code">
 </div>
 <div style="position:absolute;left:402.5px;top:607.2px;width:865.7px;height:13.6px;background:#ffffaa"></div>
 <div style="position:absolute;left:401px;top:99px;width:1px;height:672px;background:#dddddd"></div>
 <div style="position:absolute;left:1268px;top:99px;width:9px;height:672px;background:#f2f2f2"></div>
 <div style="position:absolute;left:1276.5px;top:98px;width:1.5px;height:673px;background:#8fb2d8"></div>
 <div style="position:absolute;left:1270px;top:603px;width:5.6px;height:165px;background:#d2d2d2;border-radius:3px"></div>
 <div class="ln" style="top:114.01px">21</div>
<div class="ln" style="top:181.06px">18</div>
<div class="ln" style="top:194.47px">22</div>
<div class="ln" style="top:207.88px">24</div>
<div class="ln" style="top:261.52px">18</div>
<div class="ln" style="top:274.93px">22</div>
<div class="ln" style="top:288.34px">24</div>
<div class="ln" style="top:341.98px">18</div>
<div class="ln" style="top:355.39px">22</div>
<div class="ln" style="top:368.80px">24</div>
<div class="ln" style="top:422.44px">7</div>
<div class="ln" style="top:476.08px">1</div>
<div class="ln" style="top:489.49px">2</div>
<div class="ln" style="top:529.72px">2</div>
<div class="ln" style="top:543.13px">3</div>
<div class="ln" style="top:556.54px">4</div>
<div class="ln" style="top:569.95px">7</div>
 <div style="position:absolute;left:0;top:0;width:1268px;height:771px;overflow:hidden">
 <div class="cl" style="top:100.60px">        <i class="sep">}</i> <i class="kw">else</i> <i class="sep">{</i></div>
<div class="cl" style="top:114.01px">            <i class="kw">this</i>.max_preload_required <i class="op">=</i> <i class="kw">true</i>;</div>
<div class="cl" style="top:127.42px">        <i class="sep">}</i></div>
<div class="cl" style="top:140.83px">    <i class="sep">}</i></div>
<div class="cl" style="top:154.24px"></div>
<div class="cl" style="top:167.65px">    <i class="kw">public</i> <i class="kw">void</i> setAdultFlag<i class="sep">(</i><i class="ty">boolean</i> z2<i class="sep">)</i> <i class="sep">{</i></div>
<div class="cl" style="top:181.06px">        MCLogUtil.startLog<i class="sep">(</i><i class="str">&quot;setAdultFlag&quot;</i> <i class="op">+</i> z2<i class="sep">)</i>;</div>
<div class="cl" style="top:194.47px">        <i class="kw">this</i>.isAdultUpdate <i class="op">=</i> <i class="kw">true</i>;</div>
<div class="cl" style="top:207.88px">        <i class="kw">this</i>.isAdult <i class="op">=</i> z2;</div>
<div class="cl" style="top:221.29px">    <i class="sep">}</i></div>
<div class="cl" style="top:234.70px"></div>
<div class="cl" style="top:248.11px">    <i class="kw">public</i> <i class="kw">void</i> setConsentFlag<i class="sep">(</i><i class="ty">boolean</i> z2<i class="sep">)</i> <i class="sep">{</i></div>
<div class="cl" style="top:261.52px">        MCLogUtil.startLog<i class="sep">(</i><i class="str">&quot;setConsentFlag&quot;</i> <i class="op">+</i> z2<i class="sep">)</i>;</div>
<div class="cl" style="top:274.93px">        <i class="kw">this</i>.consentUpdate <i class="op">=</i> <i class="kw">true</i>;</div>
<div class="cl" style="top:288.34px">        <i class="kw">this</i>.consent <i class="op">=</i> z2;</div>
<div class="cl" style="top:301.75px">    <i class="sep">}</i></div>
<div class="cl" style="top:315.16px"></div>
<div class="cl" style="top:328.57px">    <i class="kw">public</i> <i class="kw">void</i> setDoNotSellFlag<i class="sep">(</i><i class="ty">boolean</i> z2<i class="sep">)</i> <i class="sep">{</i></div>
<div class="cl" style="top:341.98px">        MCLogUtil.startLog<i class="sep">(</i><i class="str">&quot;setDoNotSellFlag&quot;</i> <i class="op">+</i> z2<i class="sep">)</i>;</div>
<div class="cl" style="top:355.39px">        <i class="kw">this</i>.doNotSellUpdate <i class="op">=</i> <i class="kw">true</i>;</div>
<div class="cl" style="top:368.80px">        <i class="kw">this</i>.doNotSell <i class="op">=</i> z2;</div>
<div class="cl" style="top:382.21px">    <i class="sep">}</i></div>
<div class="cl" style="top:395.62px"></div>
<div class="cl" style="top:409.03px">    <i class="kw">public</i> <i class="kw">void</i> setUserID<i class="sep">(</i><i class="fn">String</i> str<i class="sep">)</i> <i class="sep">{</i></div>
<div class="cl" style="top:422.44px">        AppLovinSdk.getInstance<i class="sep">(</i><i class="kw">this</i>.mContext<i class="sep">)</i>.setUserIdentifier<i class="sep">(</i>str<i class="sep">)</i>;</div>
<div class="cl" style="top:435.85px">    <i class="sep">}</i></div>
<div class="cl" style="top:449.26px"></div>
<div class="cl" style="top:462.67px">    <i class="kw">public</i> <i class="kw">void</i> showApplovinMAXRewardAD<i class="sep">(</i>MCCommonCallback mCCommonCallback<i class="sep">)</i> <i class="sep">{</i></div>
<div class="cl" style="top:476.08px">        MCLogUtil.v<i class="sep">(</i>TAG, <i class="str">&quot;showApplovinMAXRewardAD&quot;</i><i class="sep">)</i>;</div>
<div class="cl" style="top:489.49px">        showApplovinMAXRewardAD<i class="sep">(</i><i class="str">&quot;&quot;</i>, mCCommonCallback<i class="sep">)</i>;</div>
<div class="cl" style="top:502.90px">    <i class="sep">}</i></div>
<div class="cl" style="top:516.31px"></div>
<div class="cl" style="top:529.72px">    <i class="kw">public</i> <i class="kw">void</i> showApplovinMAXRewardAD<i class="sep">(</i><i class="fn">String</i> str, MCCommonCallback mCCommonCallback<i class="sep">)</i> <i class="sep">{</i></div>
<div class="cl" style="top:543.13px">        MCLogUtil.v<i class="sep">(</i>TAG, <i class="str">&quot;showApplovinMAXRewardAD&amp;placement&quot;</i><i class="sep">)</i>;</div>
<div class="cl" style="top:556.54px">        <i class="kw">if</i> <i class="sep">(</i><i class="op">!</i><i class="kw">this</i>.max_inited<i class="sep">)</i> <i class="sep">{</i></div>
<div class="cl" style="top:569.95px">            MCApplovinMAXRewardModel.fail<i class="sep">(</i>AD.AD_SDK_NOT_INIT.jsonWithMsg<i class="sep">(</i><i class="str">&quot;AppLovinSdk isn&#x27;t init&quot;</i><i class="sep">))</i>;</div>
<div class="cl" style="top:583.36px">            <i class="kw">return</i>;</div>
<div class="cl" style="top:596.77px">        <i class="sep">}</i></div>
<div class="cl" style="top:610.18px">        JSONObject jSONObject <i class="op">=</i> <i class="kw">new</i> JSONObject<i class="sep">()</i>;</div>
<div class="cl" style="top:623.59px">        jSONObject.put<i class="sep">(</i>Event.code, <i class="num">1</i><i class="sep">)</i>;</div>
<div class="cl" style="top:637.00px">        jSONObject.put<i class="sep">(</i><i class="str">&quot;msg&quot;</i>, <i class="str">&quot;<span class="cj">广告</span>MOCK<span class="cj">播放</span>&quot;</i><i class="sep">)</i>;</div>
<div class="cl" style="top:650.41px">        jSONObject.put<i class="sep">(</i><i class="str">&quot;uuid&quot;</i>, <i class="str">&quot;testuuid001&quot;</i><i class="sep">)</i>;</div>
<div class="cl" style="top:663.82px">        mCCommonCallback.onResult<i class="sep">(</i><i class="num">1</i>, <i class="str">&quot;<span class="cj">广告</span>MOCK<span class="cj">播放</span>&quot;</i>, jSONObject.toString<i class="sep">())</i>;</div>
<div class="cl" style="top:677.23px">        JSONObject jSONObject2 <i class="op">=</i> <i class="kw">new</i> JSONObject<i class="sep">()</i>;</div>
<div class="cl" style="top:690.64px">        jSONObject2.put<i class="sep">(</i>Event.code, AdError.MISSING_DEPENDENCIES_ERROR<i class="sep">)</i>;</div>
<div class="cl" style="top:704.05px">        jSONObject2.put<i class="sep">(</i><i class="str">&quot;msg&quot;</i>, <i class="str">&quot;<span class="cj">广告播放</span>hidden&quot;</i><i class="sep">)</i>;</div>
<div class="cl" style="top:717.46px">        jSONObject2.put<i class="sep">(</i><i class="str">&quot;uuid&quot;</i>, <i class="str">&quot;testuuid001&quot;</i><i class="sep">)</i>;</div>
<div class="cl" style="top:730.87px">        mCCommonCallback.onResult<i class="sep">(</i>AdError.MISSING_DEPENDENCIES_ERROR, <i class="str">&quot;<span class="cj">广告播放</span>hidden&quot;</i>, jSONObject2.toString<i class="sep">())</i>;</div>
<div class="cl" style="top:744.28px">    <i class="sep">}</i></div>
<div class="cl" style="top:757.69px"><i class="sep">}</i></div>
 </div>
 <div style="position:absolute;left:715px;top:608.2px;width:1.3px;height:12.4px;background:#ff0000"></div>
 <div style="position:absolute;left:359px;top:770.5px;width:918px;height:1px;background:#8fb2d8"></div>
 <div style="position:absolute;left:359px;top:770.8px;width:49.5px;height:2.6px;background:#1565c0"></div>

 <!-- bottom tabs -->
 <div class="bt" style="left:369.2px">Code</div>
 <div class="bt" style="left:418.2px">Smali</div>
 <div class="bt" style="left:468.5px">Simple</div>
 <div class="bt" style="left:526px">Fallback</div>
 <div style="position:absolute;left:628px;top:778.5px;width:13px;height:13px;border:1px solid #a5a5a5;border-radius:3px;background:#fff"></div>
 <div class="bt" style="left:644px;top:779.8px">Split view</div>
 <div style="position:absolute;left:632.5px;top:806px;width:2px;height:2px;border-radius:1px;background:#999"></div><div style="position:absolute;left:636px;top:806px;width:2px;height:2px;border-radius:1px;background:#999"></div><div style="position:absolute;left:639.5px;top:806px;width:2px;height:2px;border-radius:1px;background:#999"></div>
 <div style="position:absolute;left:814.5px;top:801.5px;width:2.2px;height:2.2px;border-radius:1.1px;background:#999"></div><div style="position:absolute;left:819px;top:801.5px;width:2.2px;height:2.2px;border-radius:1.1px;background:#999"></div><div style="position:absolute;left:823.5px;top:801.5px;width:2.2px;height:2.2px;border-radius:1.1px;background:#999"></div>

 <!-- status -->
 <div class="st" style="left:0.2px">Issues:</div>
 <div style="position:absolute;left:111.5px;top:786px;width:11px;height:11px;border-radius:50%;background:#e8676b"></div>
 <div style="position:absolute;left:116px;top:787.8px;width:2px;height:4.5px;background:#fff"></div>
 <div style="position:absolute;left:116px;top:793.2px;width:2px;height:2px;background:#fff"></div>
 <div class="st" style="left:128px">910 errors</div>
 <svg style="position:absolute;left:251.5px;top:785.5px" width="13" height="12" viewBox="0 0 13 12"><path d="M6.5 0.5L12.7 11.5H0.3z" fill="#f4a53a"/><path d="M6 4h1v4.2H6zM6 9.2h1v1.1H6z" fill="#fff"/></svg>
 <div class="st" style="left:268.5px">29693 warnings</div>
</div>
</body></html>
